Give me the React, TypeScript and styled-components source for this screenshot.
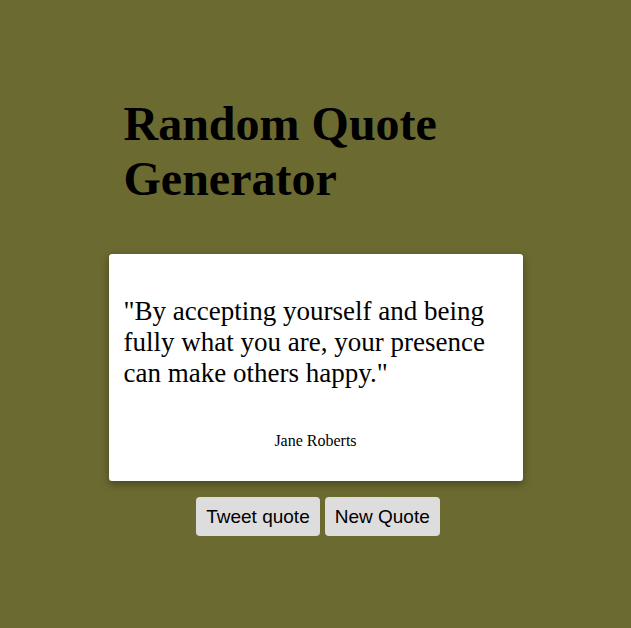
import React from "react";
import styled, { createGlobalStyle } from "styled-components";

const Global = createGlobalStyle`
  html, body { margin: 0; padding: 0; }
  body {
    background: #6b6a31;
    font-family: "Liberation Serif", "Times New Roman", serif;
    min-height: 628px;
  }
`;

const Page = styled.main`
  display: flex;
  flex-direction: column;
  align-items: center;
  padding-top: 96px;
`;

const Column = styled.div`
  width: 414px;
  display: flex;
  flex-direction: column;
`;

const Title = styled.h1`
  margin: 0 0 48px;
  padding: 0 15px;
  font-size: 48px;
  line-height: 55px;
  font-weight: bold;
  color: #000;
`;

const Card = styled.section`
  background: #fff;
  border-radius: 3px;
  box-shadow: 0 3px 8px rgba(0, 0, 0, 0.35);
  padding: 42px 15px 30px;
  height: 227px;
  box-sizing: border-box;
  display: flex;
  flex-direction: column;
`;

const Quote = styled.p`
  margin: 0;
  font-size: 27px;
  line-height: 31px;
  color: #000;
`;

const Author = styled.p`
  margin: 43px 0 0;
  text-align: center;
  font-size: 16px;
  line-height: 18px;
  color: #000;
`;

const Actions = styled.div`
  display: flex;
  justify-content: center;
  gap: 5px;
  margin-top: 16px;
  padding-left: 5px;
`;

const Button = styled.button`
  font-family: "Liberation Sans", Arial, sans-serif;
  font-size: 19px;
  height: 39px;
  padding: 0 10px;
  background: #dddddd;
  color: #000;
  border: none;
  border-radius: 4px;
  cursor: pointer;
`;

export default function App() {
  return (
    <>
      <Global />
      <Page>
        <Column>
          <Title>Random Quote Generator</Title>
          <Card>
            <Quote>
              "By accepting yourself and being fully what you are, your presence can make others happy."
            </Quote>
            <Author>Jane Roberts</Author>
          </Card>
          <Actions>
            <Button>Tweet quote</Button>
            <Button>New Quote</Button>
          </Actions>
        </Column>
      </Page>
    </>
  );
}
